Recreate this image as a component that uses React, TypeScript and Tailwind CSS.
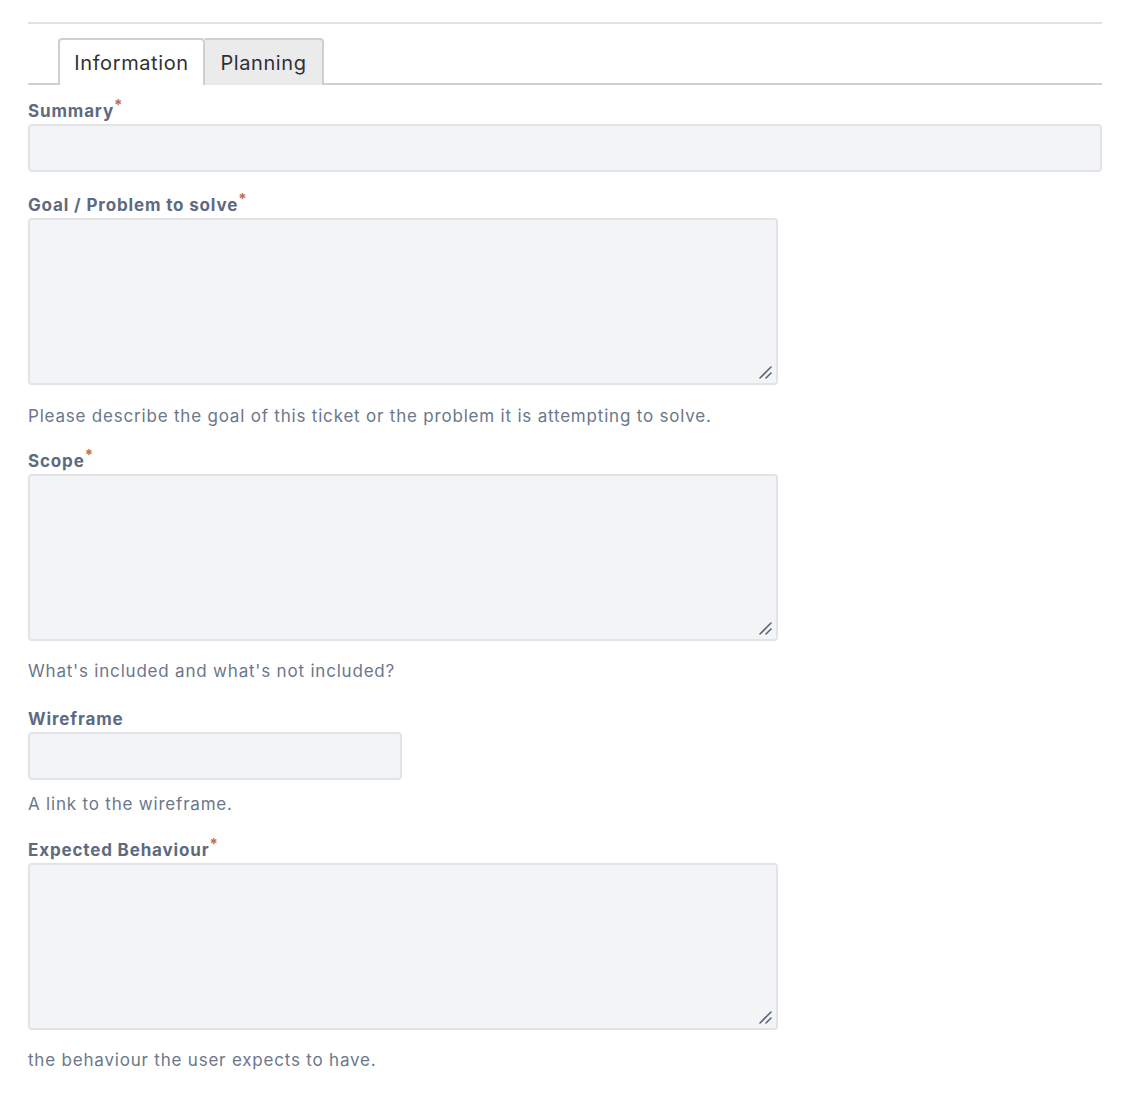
import type { ReactNode } from 'react'

function Grip() {
  return (
    <svg className="pointer-events-none absolute bottom-[4px] right-[4px]" width="14" height="14" viewBox="0 0 14 14">
      <line x1="2" y1="13" x2="13" y2="2" stroke="#5b667a" strokeWidth="1.6" strokeLinecap="round" />
      <line x1="8" y1="13" x2="13" y2="8" stroke="#5b667a" strokeWidth="1.6" strokeLinecap="round" />
    </svg>
  )
}

function Label({ children, required }: { children: ReactNode; required?: boolean }) {
  return (
    <div className="h-6 text-[17px] leading-6 font-bold tracking-[0.85px] text-[#5e6a80]">
      {children}
      {required && <span className="relative top-[-7px] text-[15px] leading-[0] font-bold text-[#c46d4d]">*</span>}
    </div>
  )
}

function Area() {
  return (
    <div className="relative mt-[1px] h-[167px] w-[750px] rounded-[4px] border-2 border-[#e1e3e7] bg-[#f3f4f6]">
      <Grip />
    </div>
  )
}

function Help({ children }: { children: ReactNode }) {
  return <div className="h-6 text-[17px] leading-6 tracking-[0.8px] text-[#6b778c]">{children}</div>
}

export default function App() {
  return (
    <div className="min-h-[1096px] bg-white pt-[22px] pl-[28px] pr-[30px]" style={{ fontFamily: 'Inter, "Noto Sans", sans-serif' }}>
      <div className="h-[2px] bg-[#e2e2e4]" />
      <div className="mt-[14px] flex border-b-2 border-[#cfcfcf] pl-[30px]">
        <div className="-mb-[2px] flex h-[47px] w-[147px] items-center justify-center rounded-t-[4px] border-2 border-b-0 border-[#cfcfcf] bg-white pt-[1px] text-[20px] tracking-[0.6px] text-[#2f3036]">
          Information
        </div>
        <div className="-mb-[2px] flex h-[47px] w-[119px] items-center justify-center rounded-tr-[4px] border-2 border-l-0 border-b-0 border-[#cfcfcf] bg-[#ebebeb] pt-[1px] text-[20px] tracking-[0.6px] text-[#2f3036]">
          Planning
        </div>
      </div>

      <div className="mt-[14px]">
        <Label required>Summary</Label>
        <div className="mt-[1px] h-[48px] w-full rounded-[4px] border-2 border-[#e1e3e7] bg-[#f3f4f6]" />
      </div>

      <div className="mt-[21px]">
        <Label required>Goal / Problem to solve</Label>
        <Area />
        <div className="mt-[19px]">
          <Help>Please describe the goal of this ticket or the problem it is attempting to solve.</Help>
        </div>
      </div>

      <div className="mt-[21px]">
        <Label required>Scope</Label>
        <Area />
        <div className="mt-[18px]">
          <Help>What's included and what's not included?</Help>
        </div>
      </div>

      <div className="mt-[24px]">
        <Label>Wireframe</Label>
        <div className="mt-[1px] h-[48px] w-[374px] rounded-[4px] border-2 border-[#e1e3e7] bg-[#f3f4f6]" />
        <div className="mt-[12px]">
          <Help>A link to the wireframe.</Help>
        </div>
      </div>

      <div className="mt-[22px]">
        <Label required>Expected Behaviour</Label>
        <Area />
        <div className="mt-[18px]">
          <Help>the behaviour the user expects to have.</Help>
        </div>
      </div>
    </div>
  )
}
